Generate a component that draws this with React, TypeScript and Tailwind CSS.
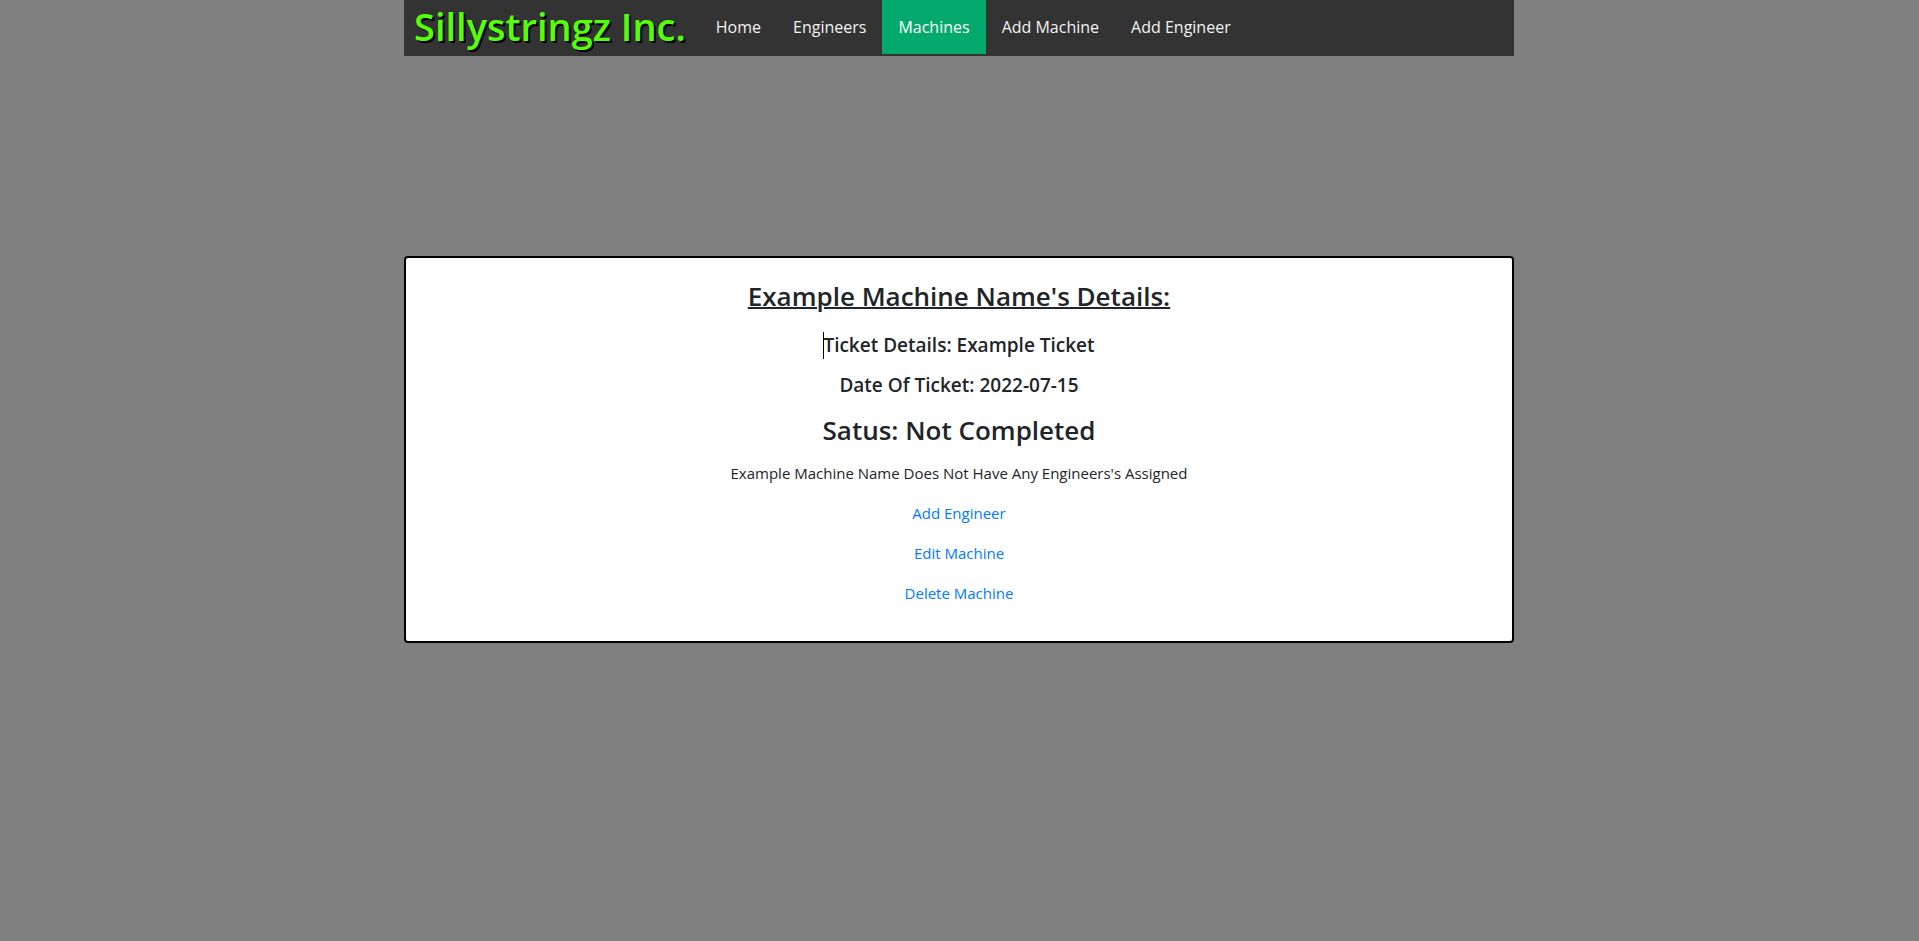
const navLinks = ["Home", "Engineers", "Machines", "Add Machine", "Add Engineer"];
const actions = ["Add Engineer", "Edit Machine", "Delete Machine"];

export default function App() {
  return (
    <div className="min-h-screen bg-[#808080] pr-px font-['Open_Sans','Noto_Sans',sans-serif] text-[15px] text-[#212529]">
      <div className="mx-auto max-w-[1110px]">
        <nav className="flex h-14 items-start bg-[#333333]">
          <a href="#" className="px-[10px] text-[38px] leading-[52px] font-semibold text-[#55ff0b] [text-shadow:2px_2px_#000]">Sillystringz Inc.</a>
          <div className="ml-1 flex">
            {navLinks.map((label) => (
              <a key={label} href="#" className={label === "Machines" ? "bg-[#04aa6d] px-4 py-[14px] text-base leading-[26px] text-white" : "px-4 py-[14px] text-base leading-[26px] text-[#f2f2f2]"}>{label}</a>
            ))}
          </div>
        </nav>
        <main className="mt-[200px] rounded border-2 border-black bg-white px-5 pt-[21px] pb-5 text-center">
          <h1 className="mb-5 text-[26px] leading-[34px] font-semibold underline decoration-2">Example Machine Name's Details:</h1>
          <h2 className="mb-4 text-[19px] leading-6 font-semibold"><span className="relative">Ticket Details: Example Ticket<span className="absolute top-0 left-0 h-[27px] w-px bg-black" /></span></h2>
          <h2 className="mb-4 text-[19px] leading-6 font-semibold">Date Of Ticket: 2022-07-15</h2>
          <h1 className="mb-[14px] text-[26px] leading-[34px] font-semibold">Satus: Not Completed</h1>
          <p className="mb-4 leading-6">Example Machine Name Does Not Have Any Engineers's Assigned</p>
          {actions.map((label) => (
            <p key={label} className="mb-4 leading-6"><a href="#" className="text-[#007bff]">{label}</a></p>
          ))}
        </main>
      </div>
    </div>
  );
}
